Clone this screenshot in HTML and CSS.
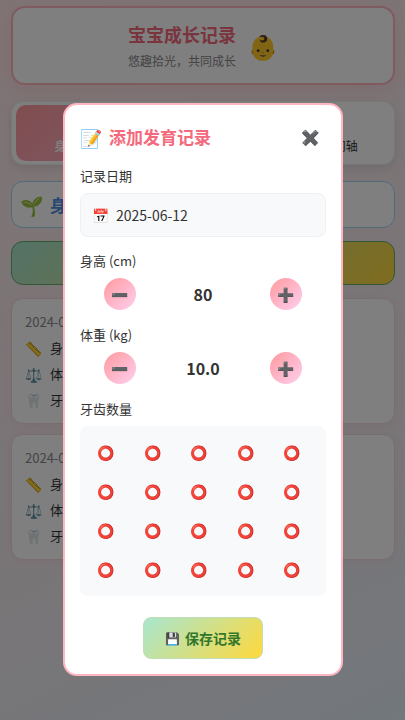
FILE: index.html
```html
<!DOCTYPE html>
<html lang="zh-CN">
<head>
<meta charset="utf-8">
<meta name="viewport" content="width=device-width, initial-scale=1">
<title>宝宝成长记录</title>
<link rel="stylesheet" href="styles.css">
</head>
<body>
<main class="page">
  <header class="hero">
    <div class="hero-text">
      <h1>宝宝成长记录</h1>
      <p>悠趣拾光，共同成长</p>
    </div>
    <span class="hero-icon">👶</span>
  </header>
  <nav class="tabs">
    <button class="tab active" type="button">身体发育</button>
    <button class="tab" type="button" aria-label="里程碑"></button>
    <button class="tab" type="button">成长时间轴</button>
  </nav>
  <h2 class="section"><span class="section-icon">🌱</span>身体</h2>
  <button class="add" type="button" aria-label="添加记录"></button>
  <article class="record">
    <time>2024-06</time>
    <p><span class="record-icon">📏</span>身高</p>
    <p><span class="record-icon">⚖️</span>体重</p>
    <p><span class="record-icon">🦷</span>牙齿</p>
  </article>
  <article class="record">
    <time>2024-03</time>
    <p><span class="record-icon">📏</span>身高</p>
    <p><span class="record-icon">⚖️</span>体重</p>
    <p><span class="record-icon">🦷</span>牙齿</p>
  </article>
</main>
<div class="overlay">
  <form class="modal" role="dialog" aria-labelledby="dialog-title">
    <div class="modal-head">
      <span class="modal-icon">📝</span>
      <h2 id="dialog-title">添加发育记录</h2>
      <button class="close" type="button" aria-label="关闭">✖️</button>
    </div>
    <label class="label" for="date">记录日期</label>
    <div class="date">
      <span class="date-icon">📅</span>
      <input id="date" type="text" value="2025-06-12">
    </div>
    <label class="label" for="height">身高 (cm)</label>
    <div class="stepper">
      <button class="round" type="button" aria-label="减少身高">➖</button>
      <input id="height" type="text" value="80">
      <button class="round" type="button" aria-label="增加身高">➕</button>
    </div>
    <label class="label" for="weight">体重 (kg)</label>
    <div class="stepper">
      <button class="round" type="button" aria-label="减少体重">➖</button>
      <input id="weight" type="text" value="10.0">
      <button class="round" type="button" aria-label="增加体重">➕</button>
    </div>
    <div class="label" id="teeth-label">牙齿数量</div>
    <div class="teeth" role="group" aria-labelledby="teeth-label">
      <button type="button">⭕</button><button type="button">⭕</button><button type="button">⭕</button><button type="button">⭕</button><button type="button">⭕</button>
      <button type="button">⭕</button><button type="button">⭕</button><button type="button">⭕</button><button type="button">⭕</button><button type="button">⭕</button>
      <button type="button">⭕</button><button type="button">⭕</button><button type="button">⭕</button><button type="button">⭕</button><button type="button">⭕</button>
      <button type="button">⭕</button><button type="button">⭕</button><button type="button">⭕</button><button type="button">⭕</button><button type="button">⭕</button>
    </div>
    <button class="save" type="submit"><span class="save-icon">💾</span>保存记录</button>
  </form>
</div>
</body>
</html>
```

FILE: styles.css
```css
* { box-sizing: border-box; margin: 0; }

body {
  min-height: 100vh;
  overflow: hidden;
  background: linear-gradient(155deg, #ffe8ea 0%, #f1ecf0 70%, #e6f0fa 100%);
  color: #333;
  font: 13px/20px "Noto Sans CJK SC", "Noto Color Emoji", sans-serif;
}

button, input {
  font: inherit;
  color: inherit;
  border: 0;
  padding: 0;
  background: none;
}

.page { padding: 6px 10px 6px 11px; }

.hero {
  display: flex;
  align-items: center;
  justify-content: center;
  gap: 12px;
  height: 79px;
  margin-bottom: 16px;
  border: 2px solid #ffb6c1;
  border-radius: 14px;
  background: #fff;
  box-shadow: 0 4px 16px rgba(255, 107, 129, .15);
  text-align: center;
}
.hero h1 { padding-top: 2px; font-size: 18px; line-height: 28px; color: #f5697c; }
.hero p { font-size: 12px; line-height: 26px; color: #888; }
.hero-icon { font-size: 24px; line-height: 28px; }

.tabs {
  display: grid;
  grid-template-columns: repeat(3, 1fr);
  height: 64px;
  padding: 3px 4px;
  margin-bottom: 16px;
  border: 1px solid #eee;
  border-radius: 12px;
  background: #fff;
  box-shadow: 0 3px 10px rgba(0, 0, 0, .1);
}
.tab {
  display: flex;
  align-items: flex-end;
  justify-content: center;
  padding-bottom: 5px;
  border-radius: 10px;
  font-size: 12px;
}
.tab.active {
  background: linear-gradient(135deg, #ff9a9e, #fcb6d0);
  color: #fff;
  font-weight: 700;
}

.section {
  display: flex;
  align-items: center;
  gap: 6px;
  height: 47px;
  margin-bottom: 13px;
  padding: 0 8px;
  border: 1px solid #a0d4f5;
  border-radius: 12px;
  background: #fff;
  font-size: 17px;
  color: #4a90e2;
}
.section-icon { font-size: 19px; font-weight: 400; }

.add {
  display: block;
  width: 100%;
  height: 44px;
  margin-bottom: 13px;
  border: 1px solid #66ad6b;
  border-radius: 12px;
  background: linear-gradient(135deg, #a8e6cf, #ffd93d);
}

.record {
  height: 126px;
  margin-bottom: 10px;
  padding: 10px 13px;
  border: 1px solid #f0dadd;
  border-radius: 12px;
  background: #fff;
  box-shadow: 0 2px 10px rgba(255, 107, 129, .1);
}
.record time { display: block; line-height: 26px; color: #888; }
.record p { display: flex; line-height: 26px; }
.record-icon { width: 25px; font-size: 14px; }

.overlay {
  position: fixed;
  inset: 0;
  display: flex;
  justify-content: center;
  align-items: flex-start;
  padding: 103px 0 0 1px;
  background: rgba(0, 0, 0, .5);
}

.modal {
  width: 69%;
  min-width: 280px;
  max-width: 400px;
  padding: 15px;
  border: 2px solid #ffb6c1;
  border-radius: 14px;
  background: #fff;
}
.modal-head { display: flex; align-items: center; height: 34px; margin-bottom: 12px; }
.modal-icon { width: 29px; font-size: 18px; }
.modal-head h2 { flex: 1; font-size: 17px; color: #f5697c; }
.close { width: 30px; height: 30px; font-size: 15px; }

.label { display: block; height: 27px; }

.date {
  display: flex;
  align-items: center;
  height: 44px;
  margin-bottom: 14px;
  padding: 0 11px;
  border: 1px solid #eef0f3;
  border-radius: 8px;
  background: #f8f9fb;
}
.date-icon { width: 24px; font-size: 14px; }
.date input { flex: 1; min-width: 0; font-size: 14px; outline: 0; }

.stepper {
  display: flex;
  align-items: center;
  justify-content: space-between;
  margin-bottom: 15px;
  padding: 0 24px;
}
.stepper input {
  width: 60px;
  text-align: center;
  font-size: 16px;
  font-weight: 700;
  outline: 0;
}
.round {
  width: 32px;
  height: 32px;
  border-radius: 50%;
  background: linear-gradient(135deg, #ff9a9e, #fecfef);
  font-size: 14px;
}

.teeth {
  display: grid;
  grid-template-columns: repeat(5, 1fr);
  gap: 7px;
  padding: 10px 10px 11px;
  margin-bottom: 21px;
  border-radius: 8px;
  background: #f8f9fb;
}
.teeth button { width: 32px; height: 32px; font-size: 14px; }

.save {
  display: flex;
  align-items: center;
  justify-content: center;
  gap: 5px;
  width: 120px;
  height: 42px;
  margin: 0 auto;
  border: 1px solid #c0ddb8;
  border-radius: 8px;
  background: linear-gradient(135deg, #a8e6cf, #ffd93d);
  color: #33772c;
  font-size: 14px;
  font-weight: 700;
}
.save-icon { font-size: 12px; }
```
